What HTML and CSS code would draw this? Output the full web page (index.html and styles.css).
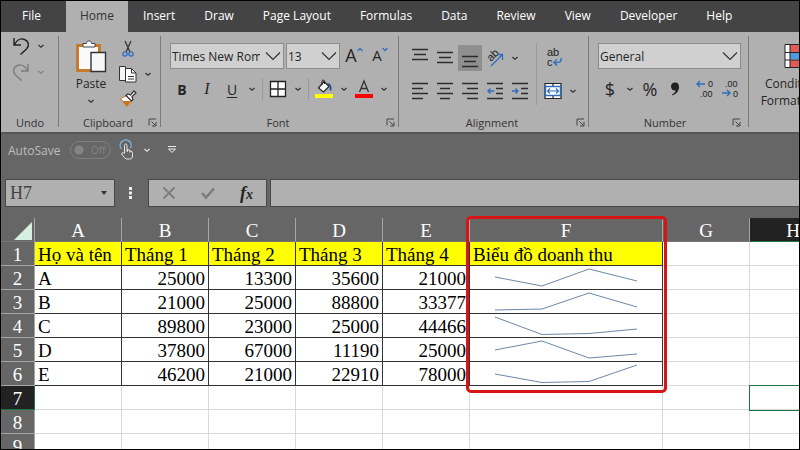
FILE: index.html
```html
<!DOCTYPE html>
<html lang="vi">
<head>
  <meta charset="UTF-8" />
  <meta name="viewport" content="width=device-width, initial-scale=1.0"/>
  <title>Excel - Sparklines</title>
  <link rel="stylesheet" href="styles.css">
</head>
<body>
  <!-- shared icons -->
  <svg class="defs" aria-hidden="true">
    <symbol id="chev" viewBox="0 0 8 8"><path d="M1.5 3 4 5.3 6.5 3" fill="none" stroke="currentColor" stroke-width="1.1"/></symbol>
    <symbol id="chev-big" viewBox="0 0 16 16"><path d="M1 4.500 8 11.500 15 4.500" fill="none" stroke="#333" stroke-width="1.2"/></symbol>
    <symbol id="launch" viewBox="0 0 9 9"><path d="M1 7.500V1h7M3.500 3.500 7.500 7.500M8 4v4H4" fill="none" stroke="#444"/></symbol>
  </svg>

  <nav class="tabs">
    <a class="file" href="#">File</a>
    <a class="active" href="#">Home</a>
    <a href="#">Insert</a>
    <a href="#">Draw</a>
    <a href="#">Page Layout</a>
    <a href="#">Formulas</a>
    <a href="#">Data</a>
    <a href="#">Review</a>
    <a href="#">View</a>
    <a href="#">Developer</a>
    <a href="#">Help</a>
  </nav>

  <div class="ribbon">
    <section class="group undo">
      <div class="tools">
        <div class="row">
          <button class="tool" aria-label="Undo"><svg width="18" height="20"><path d="M2 2v7h7M2.500 8.500C5 4 9 2 12.500 3.500 17 5.500 17.500 10 14.500 13L8.500 18.500" fill="none" stroke="#222" stroke-width="1.400"/></svg></button>
          <button class="drop" aria-label="Undo list"><svg><use href="#chev"/></svg></button>
        </div>
        <div class="row faded">
          <button class="tool" aria-label="Redo"><svg width="18" height="20"><path d="M16 2v7H9M15.500 8.500C13 4 9 2 5.500 3.500 1 5.500.5 10 3.500 13l6 5.500" fill="none" stroke="#7c7c7c" stroke-width="1.400"/></svg></button>
          <button class="drop" aria-label="Redo list"><svg><use href="#chev"/></svg></button>
        </div>
      </div>
      <footer><span>Undo</span></footer>
    </section>

    <section class="group clipboard">
      <div class="tools">
        <button class="big">
          <svg width="32" height="34"><path d="M2.500 6.500h22v25h-22z" fill="#fafafa" stroke="#c87a2c" stroke-width="3"/><path d="M8 8V4.500h3.500C11.500 1 16.500 1 16.500 4.500H20V8z" fill="#fff" stroke="#444"/><path d="M16 13.500h14.500v19H16z" fill="#f6f8f8" stroke="#333" stroke-width="1.400"/></svg>
          <span>Paste</span>
          <svg class="small"><use href="#chev"/></svg>
        </button>
        <div class="stack">
          <button class="tool" aria-label="Cut"><svg width="14" height="18"><path d="M4 1l5 11M10 1 5 12" stroke="#333" stroke-width="1.300"/><circle cx="4" cy="14" r="2.100" fill="none" stroke="#2f6cc0" stroke-width="1.300"/><circle cx="10" cy="14" r="2.100" fill="none" stroke="#2f6cc0" stroke-width="1.300"/></svg></button>
          <div class="row">
            <button class="tool" aria-label="Copy"><svg width="20" height="18"><path d="M1.500 1.500h6v14h-6z" fill="#f6f6f6" stroke="#333"/><path d="M7.500 3.500h6l4.500 4.500v9H7.500z" fill="#fff" stroke="#333"/><path d="M13.500 3.500V8H18M10 11.500h6M10 14h6" fill="none" stroke="#333"/></svg></button>
            <button class="drop" aria-label="Copy list"><svg><use href="#chev"/></svg></button>
          </div>
          <button class="tool" aria-label="Format Painter"><svg width="18" height="18"><path d="M1.500 8.500 7 6l6 5.500-5 5z" fill="#fff" stroke="#c87a2c"/><path d="M3 11h9.500L8 16.500z" fill="#c8731f"/><path d="M7 5.500l2-1.500 2.500 1L15 1l2 2-4 3.500 1 3-1.500 1.500z" fill="#fff" stroke="#333" stroke-width="1.200"/></svg></button>
        </div>
      </div>
      <footer><span>Clipboard</span><button aria-label="Clipboard settings"><svg><use href="#launch"/></svg></button></footer>
    </section>

    <section class="group font">
      <div class="tools">
        <div class="row pickers">
          <div class="combo family"><select aria-label="Font name"><option>Times New Roman</option></select><svg><use href="#chev-big"/></svg></div>
          <div class="combo size"><select aria-label="Font size"><option>13</option></select><svg><use href="#chev-big"/></svg></div>
          <button class="tool grow" aria-label="Increase font size">A<svg width="6" height="5"><path d="M.5 4 3 1.500 5.500 4" fill="none" stroke="#2f6cc0" stroke-width="1.300"/></svg></button>
          <button class="tool shrink" aria-label="Decrease font size">A<svg width="6" height="5"><path d="M.5 1 3 3.500 5.500 1" fill="none" stroke="#2f6cc0" stroke-width="1.300"/></svg></button>
        </div>
        <div class="row">
          <button class="tool bold">B</button>
          <button class="tool italic">I</button>
          <button class="tool underline">U</button>
          <button class="drop" aria-label="Underline list"><svg><use href="#chev"/></svg></button>
          <i class="sep"></i>
          <button class="tool" aria-label="Borders"><svg width="18" height="18"><path d="M1.500 1.500h15v15h-15zM9 1.500v15M1.500 9h15" fill="#fff" stroke="#222" stroke-width="1.300"/></svg></button>
          <button class="drop" aria-label="Borders list"><svg><use href="#chev"/></svg></button>
          <i class="sep"></i>
          <button class="tool" aria-label="Fill Color"><svg width="18" height="20"><path d="M9 2.500l5 5-5.500 5.500-5-4z" fill="#fff" stroke="#222" stroke-width="1.200"/><path d="M7 6V2.500c0-2 2.500-2 2.500 0V5" fill="none" stroke="#222"/><path d="M12.500 5c3 0 3.500 3 3 6.500" fill="none" stroke="#234f8c" stroke-width="1.800"/><path d="M0 15h18v4H0z" fill="#ff0"/></svg></button>
          <button class="drop" aria-label="Fill Color list"><svg><use href="#chev"/></svg></button>
          <button class="tool" aria-label="Font Color"><svg width="18" height="20"><path d="M4.500 13 9 2l4.500 11M6 9.500h6" fill="none" stroke="#333" stroke-width="1.300"/><path d="M0 15h18v4H0z" fill="#f00"/></svg></button>
          <button class="drop" aria-label="Font Color list"><svg><use href="#chev"/></svg></button>
        </div>
      </div>
      <footer><span>Font</span><button aria-label="Font settings"><svg><use href="#launch"/></svg></button></footer>
    </section>

    <section class="group alignment">
      <div class="tools split">
        <div class="side">
          <div class="row">
            <button class="tool" aria-label="Top Align"><svg class="lines" width="16" height="18"><path d="M0 .5h16M2 5.500h12M0 10.500h16"/></svg></button>
            <button class="tool" aria-label="Middle Align"><svg class="lines" width="16" height="18"><path d="M0 3.500h16M2 8.500h12M0 13.500h16"/></svg></button>
            <button class="tool on" aria-label="Bottom Align"><svg class="lines" width="16" height="18"><path d="M0 7.500h16M2 12.500h12M0 17.500h16"/></svg></button>
            <button class="tool" aria-label="Orientation"><svg width="20" height="20"><text transform="translate(6 14) rotate(-45)" class="glyph">ab</text><path d="M6 18 17 7M12 6.500h5.500V12" fill="none" stroke="#2f6cc0" stroke-width="1.300"/></svg></button>
            <button class="drop" aria-label="Orientation list"><svg><use href="#chev"/></svg></button>
          </div>
          <div class="row">
            <button class="tool" aria-label="Align Left"><svg class="lines" width="16" height="16"><path d="M0 .5h16M0 5.500h11M0 10.500h16M0 15.500h11"/></svg></button>
            <button class="tool" aria-label="Center"><svg class="lines" width="16" height="16"><path d="M0 .5h16M3 5.500h10M0 10.500h16M3 15.500h10"/></svg></button>
            <button class="tool" aria-label="Align Right"><svg class="lines" width="16" height="16"><path d="M0 .5h16M5 5.500h11M0 10.500h16M5 15.500h11"/></svg></button>
            <button class="tool" aria-label="Decrease Indent"><svg class="lines" width="16" height="16"><path d="M0 .5h16M9 5.500h7M9 10.500h7M0 15.500h16"/><path class="arrow" d="M1 8h6M3.500 5.500 1 8l2.500 2.500"/></svg></button>
            <button class="tool" aria-label="Increase Indent"><svg class="lines" width="16" height="16"><path d="M0 .5h16M9 5.500h7M9 10.500h7M0 15.500h16"/><path class="arrow" d="M0 8h6M3.500 5.500 6 8l-2.500 2.500"/></svg></button>
          </div>
        </div>
        <i class="sep tall"></i>
        <div class="side">
          <div class="row">
            <button class="tool" aria-label="Wrap Text"><svg width="20" height="22"><text x="4" y="9" class="glyph">ab</text><text x="4" y="19" class="glyph">c</text><path d="M18 11c1 4-2 5-6.500 4.500M14 12.500l-3 3 3 3" fill="none" stroke="#2f6cc0" stroke-width="1.400"/></svg></button>
          </div>
          <div class="row">
            <button class="tool" aria-label="Merge and Center"><svg width="18" height="18"><path d="M1 1.500h16v15H1zM9 1v16" fill="#fff" stroke="#222" stroke-width="1.200"/><path d="M1.500 4.500h15v9h-15z" fill="#fff" stroke="#2f6cc0" stroke-width="1.400"/><path d="M4 9h10M6 6.500 3.500 9 6 11.500M12 6.500 14.500 9 12 11.500" fill="none" stroke="#2f6cc0" stroke-width="1.200"/></svg></button>
            <button class="drop" aria-label="Merge list"><svg><use href="#chev"/></svg></button>
          </div>
        </div>
      </div>
      <footer><span>Alignment</span><button aria-label="Alignment settings"><svg><use href="#launch"/></svg></button></footer>
    </section>

    <section class="group number">
      <div class="tools">
        <div class="row">
          <div class="combo format"><select aria-label="Number format"><option>General</option></select><svg><use href="#chev-big"/></svg></div>
        </div>
        <div class="row">
          <button class="tool sign">$</button>
          <button class="drop" aria-label="Currency list"><svg><use href="#chev"/></svg></button>
          <button class="tool sign">%</button>
          <button class="tool" aria-label="Comma Style"><svg width="10" height="14"><path d="M5 .5c3 0 4 2 4 4.500 0 4-2.500 7-6.500 8.500L2 12.500c2.500-1.200 3.500-2.500 3.800-4C3 9 1 7 1 4.500 1 2 2.800.5 5 .5z" fill="#222"/></svg></button>
          <i class="sep"></i>
          <button class="tool" aria-label="Increase Decimal"><svg width="18" height="20"><text x="12" y="8" class="digits">0</text><text x="4" y="18" class="digits">.00</text><path d="M1 5h8M4 2 1 5l3 3" fill="none" stroke="#2f6cc0" stroke-width="1.400"/></svg></button>
          <button class="tool" aria-label="Decrease Decimal"><svg width="18" height="20"><text x="4" y="8" class="digits">.00</text><text x="12" y="18" class="digits">0</text><path d="M1 14h8M6 11l3 3-3 3" fill="none" stroke="#2f6cc0" stroke-width="1.400"/></svg></button>
        </div>
      </div>
      <footer><span>Number</span><button aria-label="Number settings"><svg><use href="#launch"/></svg></button></footer>
    </section>

    <section class="group styles">
      <button class="big">
        <svg width="26" height="26"><path d="M1 1.500h24v23H1z" fill="#fff" stroke="#222"/><path d="M6 2h19v7H6zM6 17h19v7H6z" fill="#e05a5a"/><path d="M6 9.500h9v7H6z" fill="#4f9be0"/><path d="M1 9.500h24M1 17h24M6 1.500v23" stroke="#222"/></svg>
        <span>Conditional<br>Formatting <svg class="small"><use href="#chev"/></svg></span>
      </button>
    </section>
  </div>

  <div class="quick">
    <label class="autosave">AutoSave <input type="checkbox" disabled><span>Off</span></label>
    <button aria-label="Touch mode"><svg width="16" height="20"><path d="M2.500 9A5.500 5.500 0 1 1 11.500 8" fill="none" stroke="#7fb2dc" stroke-width="1.400"/><path d="M5.500 13V5.500c0-2 2.500-2 2.500 0V11l.5-1.500 2 .5.5 1 2 .5.500 2V16c0 2-1 3-3 3H8c-2 0-4-3-5.500-5 .5-1.500 2-1.500 3-.5M8.300 10v2M10.800 10.500v2" fill="none" stroke="#e6e6e6"/></svg></button>
    <button aria-label="Touch mode list"><svg width="8" height="8"><use href="#chev"/></svg></button>
    <button class="custom" aria-label="Customize toolbar"><svg width="10" height="10"><path d="M1 1.500h8M1.500 4 5 7.500 8.500 4z" fill="none" stroke="#eee"/></svg></button>
  </div>

  <div class="formula">
    <div class="name">
      <input type="text" value="H7" aria-label="Name Box">
      <svg width="6" height="4"><path d="M0 0h6L3 4z" fill="#333"/></svg>
    </div>
    <svg class="dots" width="4" height="14"><path d="M0 1h3v3H0zM0 5.500h3v3H0zM0 10h3v3H0z" fill="#eee"/></svg>
    <div class="actions">
      <button aria-label="Cancel"><svg width="14" height="14"><path d="M1.500 1.500 12.500 12.500M12.500 1.500 1.500 12.500" stroke="#7c7c7c" stroke-width="1.800"/></svg></button>
      <button aria-label="Enter"><svg width="14" height="12"><path d="M1 6l4 4.500 8-9" fill="none" stroke="#7c7c7c" stroke-width="2.600"/></svg></button>
      <button class="fx" aria-label="Insert Function"><span>f</span><small>x</small></button>
    </div>
    <input class="entry" type="text" aria-label="Formula Bar">
  </div>

  <main class="sheet">
    <table>
      <colgroup><col class="nums"><col><col><col><col><col><col class="wide"><col><col></colgroup>
      <thead>
        <tr><th class="corner"><svg width="18" height="18"><path d="M18 0v18H0z" fill="#d5f0e2"/></svg></th><th>A</th><th>B</th><th>C</th><th>D</th><th>E</th><th>F</th><th>G</th><th class="current">H</th></tr>
      </thead>
      <tbody>
        <tr class="title"><th>1</th><td>Họ và tên</td><td>Tháng 1</td><td>Tháng 2</td><td>Tháng 3</td><td>Tháng 4</td><td>Biểu đồ doanh thu</td><td></td><td></td></tr>
        <tr class="data"><th>2</th><td>A</td><td>25000</td><td>13300</td><td>35600</td><td>21000</td><td><svg viewBox="0 0 192 23"><polyline points="25,11 72,20 119,3 167,15"/></svg></td><td></td><td></td></tr>
        <tr class="data"><th>3</th><td>B</td><td>21000</td><td>25000</td><td>88800</td><td>33377</td><td><svg viewBox="0 0 192 23"><polyline points="25,20 72,19 119,3 167,17"/></svg></td><td></td><td></td></tr>
        <tr class="data"><th>4</th><td>C</td><td>89800</td><td>23000</td><td>25000</td><td>44466</td><td><svg viewBox="0 0 192 23"><polyline points="25,3 72,20.500 119,19.500 167,15"/></svg></td><td></td><td></td></tr>
        <tr class="data"><th>5</th><td>D</td><td>37800</td><td>67000</td><td>11190</td><td>25000</td><td><svg viewBox="0 0 192 23"><polyline points="25,12 72,3 119,20 167,16"/></svg></td><td></td><td></td></tr>
        <tr class="data"><th>6</th><td>E</td><td>46200</td><td>21000</td><td>22910</td><td>78000</td><td><svg viewBox="0 0 192 23"><polyline points="25,12 72,20.500 119,19.500 167,3"/></svg></td><td></td><td></td></tr>
        <tr><th class="current">7</th><td></td><td></td><td></td><td></td><td></td><td></td><td></td><td class="selected"></td></tr>
        <tr><th>8</th><td></td><td></td><td></td><td></td><td></td><td></td><td></td><td></td></tr>
        <tr><th>9</th><td></td><td></td><td></td><td></td><td></td><td></td><td></td><td></td></tr>
      </tbody>
    </table>
    <div class="highlight"></div>
  </main>
</body>
</html>
```
FILE: styles.css
```css
* { box-sizing: border-box; }
body {
  margin: 0;
  height: 100vh;
  border: 1px solid #000;
  overflow: hidden;
  display: flex;
  flex-direction: column;
  background: #666;
  color: #262626;
  font-family: "Open Sans", "Noto Sans", sans-serif;
  font-size: 12px;
}
button {
  padding: 0;
  border: 0;
  background: none;
  color: inherit;
  font: inherit;
  display: flex;
  align-items: center;
  justify-content: center;
}
input, select { font: inherit; color: inherit; border: 0; margin: 0; min-width: 0; }
svg { display: block; flex: none; overflow: visible; }
.defs { position: absolute; width: 0; height: 0; }

/* tabs */
.tabs { display: flex; flex: none; gap: 1px; height: 31px; background: #444; }
.tabs a {
  padding: 0 14px;
  color: #fff;
  line-height: 30px;
  text-decoration: none;
  white-space: nowrap;
}
.tabs .file { padding: 0 24px 0 21px; }
.tabs .active { background: #b0b0b0; color: #333; }

/* ribbon */
.ribbon {
  display: flex;
  flex: none;
  height: 102px;
  background: #b0b0b0;
  border-bottom: 2px solid #555;
  overflow: hidden;
}
.group {
  display: flex;
  flex: none;
  flex-direction: column;
  justify-content: space-between;
  padding: 11px 0 2px 9px;
  background: linear-gradient(#7a7a7a, #7a7a7a) right 4px / 1px 91px no-repeat;
}
.tools { display: flex; flex-direction: column; gap: 7px; }
.row { display: flex; align-items: center; gap: 1px; height: 26px; }
.group footer { display: flex; align-items: center; height: 16px; padding-right: 4px; font-size: 11px; color: #333; }
.group footer span { flex: 1; text-align: center; }
.group footer svg { width: 9px; height: 9px; }
.tool { width: 24px; height: 26px; flex: none; }
.drop { width: 14px; height: 26px; flex: none; }
.drop svg, .small { width: 8px; height: 8px; }
.on { background: #8f8f8f; }
.sep { width: 1px; height: 22px; margin: 0 2px; background: #999; }
.sep.tall { height: 62px; }
.faded { color: #7c7c7c; }
.big { flex-direction: column; }
.lines path { fill: none; stroke: #2c2c2c; stroke-width: 1.4; }
.lines .arrow { stroke: #2f6cc0; }

.undo { width: 58px; padding: 1px 4px 2px 8px; }
.undo .tools { gap: 0; }
.clipboard { width: 102px; padding-top: 4px; }
.clipboard .tools { flex-direction: row; gap: 2px; }
.clipboard .big { width: 46px; justify-content: flex-start; padding-top: 3px; }
.clipboard .big span { line-height: 22px; }
.clipboard .big .small { margin-top: 2px; }
.stack { display: flex; flex-direction: column; }
.stack .tool { height: 25px; }
.stack .row { height: 25px; }
.font { width: 238px; }
.alignment { width: 190px; }
.number { width: 160px; padding-right: 8px; }
.number footer { padding: 0; }
.styles { background: none; justify-content: flex-start; }
.styles .big { width: 78px; gap: 6px; }
.styles .big span { line-height: 17px; white-space: nowrap; }
.styles .big span svg { display: inline-block; }
.split { flex-direction: row; align-items: center; gap: 2px; }
.side { display: flex; flex-direction: column; gap: 7px; }

.pickers { gap: 2px; }
.combo {
  display: flex;
  align-items: center;
  height: 26px;
  padding: 0 2px 0 1px;
  background: #d0d0d0;
  border: 1px solid #8c8c8c;
}
.combo select { flex: 1; appearance: none; background: none; padding: 0; height: 24px; text-overflow: clip; }
.combo svg { width: 16px; height: 16px; margin-left: 5px; }
.family { width: 114px; }
.size { width: 54px; }
.format { width: 143px; }
.grow, .shrink { align-items: flex-start; line-height: 24px; }
.grow { font-size: 18px; }
.shrink { font-size: 15px; }
.grow svg, .shrink svg { margin-top: 4px; }
.bold { font-size: 14px; font-weight: bold; }
.italic { font-family: "Liberation Serif", serif; font-size: 16px; font-style: italic; }
.underline { font-size: 14px; text-decoration: underline; text-underline-offset: 2px; }
.sign { font-size: 18px; }
.glyph { font-family: "Liberation Sans", sans-serif; font-size: 11px; fill: #222; }
.digits { font-family: "Liberation Sans", sans-serif; font-size: 9px; fill: #222; }

/* quick access bar */
.quick { display: flex; align-items: center; flex: none; height: 32px; padding-left: 7px; gap: 8px; color: #eee; }
.autosave { display: flex; align-items: center; position: relative; gap: 10px; color: #bdbdbd; }
.autosave input {
  appearance: none;
  width: 41px;
  height: 18px;
  border: 1px solid #808080;
  border-radius: 9px;
  background: radial-gradient(circle at 8px 8px, #858585 4px, transparent 5px);
}
.autosave span { position: absolute; right: 6px; font-size: 10px; color: #858585; }
.custom { margin-left: 8px; }

/* formula bar */
.formula { display: flex; align-items: center; flex: none; height: 52px; padding: 13px 0 11px 4px; }
.name, .actions, .entry { height: 28px; background: #b0b0b0; border: 1px solid #484848; }
.name { display: flex; align-items: center; width: 110px; padding: 0 7px 0 4px; }
.name input { flex: 1; background: none; padding: 0; font-family: "Liberation Serif", serif; font-size: 18px; color: #444; }
.dots { margin: 0 15px 0 14px; }
.actions { display: flex; width: 119px; margin-right: 3px; }
.actions button { flex: 1; }
.fx { font-family: "Liberation Serif", serif; font-style: italic; font-weight: bold; font-size: 18px; }
.fx small { font-size: 14px; padding-top: 3px; }
.entry { flex: 1; border-right: 0; }

/* sheet */
.sheet { flex: 1; position: relative; background: #fff; font-family: "Liberation Serif", serif; }
table { width: 836px; table-layout: fixed; border-collapse: separate; border-spacing: 0; font-size: 19px; color: #000; }
.nums { width: 34px; }
col { width: 87px; }
.wide { width: 193px; }
tr { height: 24px; }
th, td { height: 24px; padding: 2px 3px 0; line-height: 21px; white-space: nowrap; }
th { background: #666; color: #fff; font-weight: normal; border-right: 1px solid #a6a6a6; border-bottom: 1px solid #a6a6a6; }
thead th { border-bottom-color: #777; }
td { border-right: 1px solid #d9d9d9; border-bottom: 1px solid #d9d9d9; }
.corner svg { margin-left: 10px; }
.title td:nth-child(-n+7) { background: #ff0; border-color: #333; }
.data td:nth-child(-n+7) { border-color: #333; }
.data td:nth-child(n+3) { text-align: right; }
.data td svg { width: 100%; height: 23px; }
.data td:nth-child(7) { padding: 0; }
polyline { fill: none; stroke: #6d87a8; stroke-width: 1; }
th.current { background: #222; border-color: #217346; }
.selected { outline: 1px solid #217346; }
/* red frame over column F */
.highlight {
  position: absolute;
  left: 465px;
  top: -2px;
  width: 201px;
  height: 177px;
  border: 3px solid #d81414;
  border-radius: 5px;
}
```
